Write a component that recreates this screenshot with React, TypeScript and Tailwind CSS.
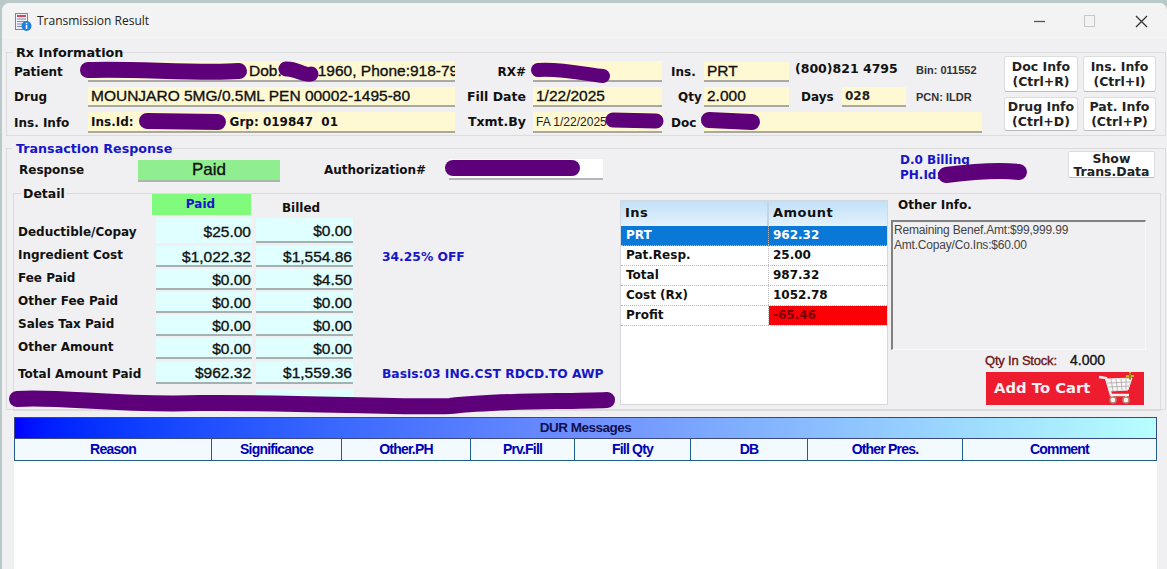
import type { ReactNode } from "react";

const labelBase = "font-['DejaVu_Sans',sans-serif] font-bold whitespace-nowrap";
const label = `${labelBase} text-[12px] text-[#111]`;
const fieldText = "font-['Liberation_Sans',sans-serif] text-[15.5px] text-[#111] [-webkit-text-stroke:0.35px_#111] whitespace-nowrap";

function Field({ className, children }: { className: string; children?: ReactNode }) {
  return (
    <div className={`flex items-center overflow-hidden bg-[#fff9d3] border-b-2 border-[#a9a9a2] pl-[3px] ${className}`}>
      {children}
    </div>
  );
}

function InfoButton({ a, b }: { a: string; b: string }) {
  return (
    <button className="flex flex-col items-center justify-center rounded-[3px] bg-white border border-[#dcdcdc] border-b-[#bbb] font-['DejaVu_Sans',sans-serif] font-bold text-[12.5px] leading-[15px] text-[#222] h-full">
      <span>{a}</span>
      <span>{b}</span>
    </button>
  );
}

const detailRows = [
  { name: "Deductible/Copay", paid: "$25.00", billed: "$0.00", note: "", rowCls: "h-[25px] mt-[3px]", labelCls: "pt-[3px]" },
  { name: "Ingredient Cost", paid: "$1,022.32", billed: "$1,554.86", note: "34.25% OFF", rowCls: "h-[21px] mt-[3px]", labelCls: "-mt-[3px]" },
  { name: "Fee Paid", paid: "$0.00", billed: "$4.50", note: "", rowCls: "h-[21px] mt-[2px]", labelCls: "-mt-[3px]" },
  { name: "Other Fee Paid", paid: "$0.00", billed: "$0.00", note: "", rowCls: "h-[21px] mt-[2px]", labelCls: "-mt-[3px]" },
  { name: "Sales Tax Paid", paid: "$0.00", billed: "$0.00", note: "", rowCls: "h-[21px] mt-[2px]", labelCls: "-mt-[3px]" },
  { name: "Other Amount", paid: "$0.00", billed: "$0.00", note: "", rowCls: "h-[21px] mt-[2px]", labelCls: "-mt-[3px]" },
  { name: "Total Amount Paid", paid: "$962.32", billed: "$1,559.36", note: "Basis:03 ING.CST RDCD.TO AWP", rowCls: "h-[22px] mt-[3px]", labelCls: "pt-[2px]" },
];

const insRows = [
  { name: "PRT", amount: "962.32", rowCls: "bg-[#0a78d6] text-white", amtCls: "" },
  { name: "Pat.Resp.", amount: "25.00", rowCls: "text-[#111]", amtCls: "" },
  { name: "Total", amount: "987.32", rowCls: "text-[#111]", amtCls: "" },
  { name: "Cost (Rx)", amount: "1052.78", rowCls: "text-[#111]", amtCls: "" },
  { name: "Profit", amount: "-65.46", rowCls: "text-[#111]", amtCls: "bg-[#fb0007] text-[#7a0008]" },
];

const durCols = [
  { name: "Reason", cls: "w-[197px]" },
  { name: "Significance", cls: "w-[130px]" },
  { name: "Other.PH", cls: "w-[129px]" },
  { name: "Prv.Fill", cls: "w-[104px]" },
  { name: "Fill Qty", cls: "w-[116px]" },
  { name: "DB", cls: "w-[117px]" },
  { name: "Other Pres.", cls: "w-[155px]" },
  { name: "Comment", cls: "flex-1" },
];

function DocIcon() {
  return (
    <svg width="17" height="19" viewBox="0 0 17 19">
      <rect x="0.5" y="0.5" width="12" height="16" fill="#eef0f6" stroke="#7b8494" />
      <rect x="2" y="2" width="9" height="2" fill="#d0485a" />
      <path d="M2 6h9M2 8.500h9M2 11h5M2 13.500h5" stroke="#7c8cae" strokeWidth="1" />
      <circle cx="11.500" cy="13" r="5" fill="#1f7fdc" />
      <rect x="10.800" y="12" width="1.500" height="4" fill="#fff" />
      <rect x="10.800" y="9.800" width="1.500" height="1.500" fill="#fff" />
    </svg>
  );
}

function CartIcon() {
  return (
    <svg width="38" height="33" viewBox="0 0 38 33" fill="none">
      <path d="M1 5 L8 6 L13 23 L31 23" stroke="#f2f2f2" strokeWidth="2.500" />
      <path d="M8 7 L34 6 L30 18 L12 19 Z" fill="#fbf4f4" stroke="#e8e8e8" />
      <path d="M13 7l2 12M18 7l1.500 12M23 7l1 11M28 6.500l0 11M9.500 11L32.500 10M11 15L31 14" stroke="#a8a8a8" strokeWidth="0.800" />
      <path d="M14 23v3M28 23v3" stroke="#f2f2f2" strokeWidth="2" />
      <circle cx="15" cy="28" r="3" fill="#f5f5f5" stroke="#b58a7a" strokeWidth="1.500" />
      <circle cx="28" cy="28" r="3" fill="#f5f5f5" stroke="#b58a7a" strokeWidth="1.500" />
      <path d="M32 0v8M28 4h8" stroke="#c8b820" strokeWidth="2" />
      <path d="M32 1v6" stroke="#3c3c10" strokeWidth="0.800" />
    </svg>
  );
}

// redaction marks sit on top of the finished screen
function Scribbles() {
  return (
    <svg className="absolute inset-0 pointer-events-none" width="1167" height="569" fill="none" stroke="#5e0079" strokeLinecap="round">
      <path d="M88 70 C130 68 200 74 239 71" strokeWidth="16" />
      <path d="M286 69 C295 68 305 76 311 74" strokeWidth="15" />
      <path d="M538 70 C560 68 590 75 603 76" strokeWidth="14" />
      <path d="M147 121 L218 122" strokeWidth="16" />
      <path d="M613 120 L656 121" strokeWidth="15" />
      <path d="M709 120 L752 122" strokeWidth="16" />
      <path d="M453 168 L572 168" strokeWidth="16" />
      <path d="M946 175 C970 172 1000 170 1019 172" strokeWidth="16" />
      <path d="M17 399 C60 396 120 406 200 403 C300 402 400 408 450 406 C500 400 560 402 607 400" strokeWidth="16" />
    </svg>
  );
}

export default function App() {
  return (
    <div className="relative w-[1167px] h-[569px] overflow-hidden bg-[#b9c9c9]">
      <div className="ml-[2px] mt-[3px] h-[566px] rounded-tl-[8px] rounded-tr-[8px] bg-[#f0eff2]">
        {/* title bar */}
        <div className="flex items-center h-[36px] rounded-t-[8px] bg-[#f3f3f3]">
          <div className="ml-[13px] mt-[2px]">
            <DocIcon />
          </div>
          <span className="ml-[5px] font-['Open_Sans',sans-serif] text-[12px] text-[#222]">Transmission Result</span>
          <div className="ml-auto flex items-center mr-[19px]">
            <svg width="12" height="12" viewBox="0 0 12 12" className="mr-[38px]">
              <path d="M0 6.500h11" stroke="#555" strokeWidth="1.300" />
            </svg>
            <svg width="12" height="12" viewBox="0 0 12 12" className="mr-[39px]">
              <rect x="0.500" y="0.500" width="10" height="11" fill="none" stroke="#c8c8c8" />
            </svg>
            <svg width="13" height="13" viewBox="0 0 13 13">
              <path d="M1 1l11 11M12 1L1 12" stroke="#333" strokeWidth="1.300" />
            </svg>
          </div>
        </div>

        {/* Rx information */}
        <div className="mt-[13px] ml-[4px] mr-[1px] h-[84px] border border-[#dcdcdc] pl-[7px]">
          <div className={`-mt-[8px] -ml-[1px] pl-[3px] w-fit bg-[#f0eff2] leading-[15px] ${labelBase} text-[12.800px] text-[#111]`}>Rx Information</div>
          <div className="flex">
            <div className="grid grid-cols-[74px_367px_78px_129px_42px_85px_193px] grid-rows-[21px_20px_21px] gap-y-[5px] mt-[1px]">
              <div className={`${label} self-center pt-[1px]`}>Patient</div>
              <Field className="">
                <span className={`${fieldText} ml-[158px]`}>Dob:</span>
                <span className={`${fieldText} ml-[36px]`}>1960, Phone:918-79</span>
              </Field>
              <div className={`${label} self-center text-right pr-[7px]`}>RX#</div>
              <Field className="" />
              <div className={`${label} self-center pl-[9px]`}>Ins.</div>
              <Field className="mt-[1px]">
                <span className={fieldText}>PRT</span>
              </Field>
              <div className="flex items-start -mt-[1px]">
                <span className={`${labelBase} text-[12.500px] text-[#111] ml-[6px] w-[121px]`}>(800)821 4795</span>
                <span className="font-['Liberation_Sans',sans-serif] font-bold text-[11px] text-[#333] leading-[20px]">Bin: 011552</span>
              </div>

              <div className={`${label} self-center`}>Drug</div>
              <Field className="">
                <span className={fieldText}>MOUNJARO 5MG/0.5ML PEN 00002-1495-80</span>
              </Field>
              <div className={`${labelBase} text-[12.500px] text-[#111] self-center text-right pr-[7px]`}>Fill Date</div>
              <Field className="">
                <span className={fieldText}>1/22/2025</span>
              </Field>
              <div className={`${label} self-center pl-[16px]`}>Qty</div>
              <Field className="">
                <span className={fieldText}>2.000</span>
              </Field>
              <div className="flex items-center">
                <span className={`${label} ml-[12px] w-[41px]`}>Days</span>
                <div className="flex items-center w-[64px] h-full bg-[#fff9d3] border-b-2 border-[#a9a9a2] pl-[3px]">
                  <span className="font-['DejaVu_Sans',sans-serif] font-bold text-[12px] text-[#222]">028</span>
                </div>
                <span className="ml-[10px] font-['Liberation_Sans',sans-serif] font-bold text-[11px] text-[#333]">PCN: ILDR</span>
              </div>

              <div className={`${label} self-center`}>Ins. Info</div>
              <Field className="">
                <span className={label}>Ins.Id:</span>
                <span className={`${label} ml-[96px]`}>Grp: 019847&nbsp; 01</span>
              </Field>
              <div className={`${labelBase} text-[12.500px] text-[#111] self-center text-right pr-[7px]`}>Txmt.By</div>
              <Field className="">
                <span className="font-['Liberation_Sans',sans-serif] text-[12px] text-[#222] whitespace-nowrap">FA 1/22/2025</span>
              </Field>
              <div className={`${label} self-center pl-[9px]`}>Doc</div>
              <Field className="col-span-2 w-[278px]" />
            </div>
            <div className="ml-[22px] -mt-[4px] grid grid-cols-[74px_73px] grid-rows-[36px_34px] gap-x-[5px] gap-y-[5px]">
              <InfoButton a="Doc Info" b="(Ctrl+R)" />
              <InfoButton a="Ins. Info" b="(Ctrl+I)" />
              <InfoButton a="Drug Info" b="(Ctrl+D)" />
              <InfoButton a="Pat. Info" b="(Ctrl+P)" />
            </div>
          </div>
        </div>

        {/* transaction response */}
        <div className="mt-[12px] ml-[4px] mr-[1px] h-[262px] border border-[#dcdcdc]">
          <div className={`-mt-[8px] ml-[5px] pl-[4px] w-fit bg-[#f0eff2] leading-[15px] ${labelBase} text-[12.700px] text-[#1616c8]`}>Transaction Response</div>
          <div className="flex items-start h-[30px] pl-[12px]">
            <span className={`${label} mt-[5px] w-[119px]`}>Response</span>
            <div className="mt-[4px] flex items-center justify-center w-[142px] h-[22px] bg-[#90ee90] border-b-2 border-[#a9b9a9] font-['Liberation_Sans',sans-serif] text-[17px] [-webkit-text-stroke:0.35px_#111] text-[#111]">Paid</div>
            <span className={`${label} mt-[5px] ml-[44px] w-[125px]`}>Authorization#</span>
            <div className="mt-[3px] w-[154px] h-[21px] bg-white border-b-2 border-[#b5b5b5]" />
            <div className="-mt-[3px] ml-[297px] w-[168px] font-['DejaVu_Sans',sans-serif] font-bold text-[12px] leading-[15px] text-[#1616c8]">
              <div>D.0 Billing</div>
              <div>PH.Id:</div>
            </div>
            <button className="-mt-[5px] flex flex-col items-center w-[87px] h-[27px] rounded-[2px] bg-white border border-[#dcdcdc] border-b-[#bbb] font-['DejaVu_Sans',sans-serif] font-bold text-[12.5px] leading-[13px] text-[#222]">
              <span>Show</span>
              <span>Trans.Data</span>
            </button>
          </div>

          {/* detail */}
          <div className="mt-[7px] ml-[6px] mr-[4px] h-[218px] border border-[#dcdcdc] flex">
            <div className="relative w-[606px]">
              <div className={`absolute -top-[8px] left-[8px] ${labelBase} text-[12.500px] text-[#111] leading-[15px] bg-[#f0eff2] px-[1px]`}>Detail</div>
              <div className="flex h-[21px] ml-[138px]">
                <div className="flex items-center justify-center w-[99px] bg-[#80fb7c] pb-[1px] pr-[2px] font-['DejaVu_Sans',sans-serif] font-bold text-[12px] text-[#1616c8]">Paid</div>
                <div className={`${label} w-[100px] text-center pt-[5px]`}>Billed</div>
              </div>
              {detailRows.map((r) => (
                <div key={r.name} className={`flex items-center ${r.rowCls}`}>
                  <div className={`${label} w-[142px] pl-[4px] ${r.labelCls}`}>{r.name}</div>
                  <div className={`flex items-center justify-end w-[96px] h-full bg-[#e0ffff] pr-[1px] pt-[2px] ${r.name === "Deductible/Copay" ? "" : "border-b-2 border-[#a5b0b0]"} ${fieldText}`}>{r.paid}</div>
                  <div className={`flex items-center justify-end ml-[4px] w-[97px] h-full bg-[#e0ffff] pr-[1px] pt-[2px] border-b-2 border-[#a5b0b0] ${fieldText}`}>{r.billed}</div>
                  <div className="ml-[29px] pt-[2px] font-['DejaVu_Sans',sans-serif] font-bold text-[12.300px] text-[#1616c8] whitespace-nowrap">{r.note}</div>
                </div>
              ))}
              <div className="mt-[6px] ml-[242px] w-[97px] h-[16px] bg-[#e0ffff]" />
            </div>

            <div className="mt-[6px] w-[268px] h-[205px] bg-white border border-[#d4d8dc] font-['DejaVu_Sans',sans-serif] font-bold text-[12px]">
              <div className="flex h-[25px] bg-gradient-to-b from-[#c0e0f8] to-[#e4f2fc] text-[#111] text-[13px] tracking-[0.5px]">
                <div className="w-[148px] flex items-center pl-[4px] pb-[1px] border-r-2 border-[#c4d4e0]">Ins</div>
                <div className="flex-1 flex items-center pl-[4px] pb-[1px]">Amount</div>
              </div>
              {insRows.map((r) => (
                <div key={r.name} className={`flex h-[20px] items-center border-b border-dotted border-[#bbb] ${r.rowCls}`}>
                  <div className="w-[148px] pl-[5px] pb-[2px] border-r border-dotted border-[#bbb] h-full flex items-center">{r.name}</div>
                  <div className={`flex-1 pl-[4px] pb-[2px] h-full flex items-center ${r.amtCls}`}>{r.amount}</div>
                </div>
              ))}
            </div>

            <div className="ml-[3px] w-[255px]">
              <div className={`${label} ml-[7px] mt-[4px] leading-[15px]`}>Other Info.</div>
              <div className="mt-[7px] h-[130px] border-t-2 border-l-2 border-r border-b border-t-[#808080] border-l-[#808080] border-r-[#f8f8f8] border-b-[#f8f8f8] pl-[1px] pt-[1px] font-['Liberation_Sans',sans-serif] text-[12px] leading-[15px] tracking-[-0.2px] text-[#444]">
                <div>Remaining Benef.Amt:$99,999.99</div>
                <div>Amt.Copay/Co.Ins:$60.00</div>
              </div>
              <div className="flex items-center mt-[2px] h-[17px] pl-[94px] font-['Liberation_Sans',sans-serif] text-[13px]">
                <span className="text-[#6b1414] tracking-[-0.2px] w-[85px] [-webkit-text-stroke:0.35px_#6b1414]">Qty In Stock:</span>
                <span className="text-[#111] text-[14px] [-webkit-text-stroke:0.35px_#111]">4.000</span>
              </div>
              <div className="flex items-center mt-[3px] ml-[95px] w-[158px] h-[33px] bg-[#ed1c2e] pl-[8px]">
                <span className="font-['DejaVu_Sans',sans-serif] font-bold text-[14.800px] text-[#f6f0f0] w-[104px] whitespace-nowrap">Add To Cart</span>
                <CartIcon />
              </div>
            </div>
          </div>
        </div>

        {/* DUR messages */}
        <div className="mt-[7px] ml-[12px] mr-[10px] h-[160px] bg-white">
          <div className="flex items-center justify-center h-[22px] border border-[#3a4a80] bg-gradient-to-r from-[#0000ff] via-[#6f8fff] to-[#b8ffff] font-['Liberation_Sans',sans-serif] font-bold text-[13.500px] tracking-[-0.5px] text-[#101050]">DUR Messages</div>
          <div className="flex h-[22px] border-b border-x border-[#1f5f90] bg-[#f2f9ff]">
            {durCols.map((c) => (
              <div key={c.name} className={`flex items-center justify-center border-r border-[#1f5f90] last:border-r-0 font-['Liberation_Sans',sans-serif] font-bold text-[14px] tracking-[-0.8px] text-[#0000b4] ${c.cls}`}>
                {c.name}
              </div>
            ))}
          </div>
        </div>
      </div>
      <Scribbles />
    </div>
  );
}
